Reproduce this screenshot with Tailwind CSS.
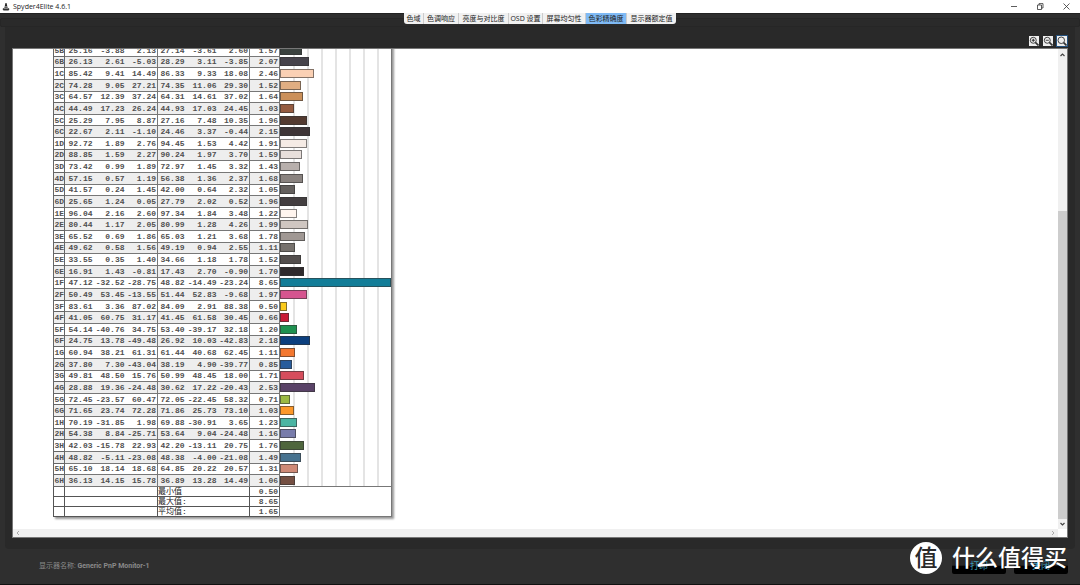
<!DOCTYPE html>
<html lang="zh-CN">
<head>
<meta charset="utf-8">
<title>Spyder4Elite 4.6.1</title>
<script src="https://cdn.jsdelivr.net/npm/@tailwindcss/browser@4"></script>
</head>
<body class="flex h-screen flex-col overflow-hidden bg-[#2f2f2f] font-['Open_Sans','Noto_Sans_CJK_SC',sans-serif] text-[7px] leading-none">
<header class="flex h-[13px] shrink-0 items-center justify-between bg-white pl-[2px] pr-[10px] text-[#222]">
  <div class="flex items-center gap-[3px]">
    <svg class="size-[8px]" viewBox="0 0 16 16"><path d="M7 0h2l1 4 1 5H5l1-5z" fill="#222"/><path d="M1 12l4-3h6l4 3-2 3H3z" fill="#333"/><path d="M5 7h6M4 11h8" stroke="#ddd"/></svg>
    <h1>Spyder4Elite 4.6.1</h1>
  </div>
  <div class="flex items-center gap-[19px]">
    <button aria-label="最小化"><svg class="size-[7px]" viewBox="0 0 7 7"><path d="M0 3.500h6" stroke="#333" stroke-width=".8"/></svg></button>
    <button aria-label="还原"><svg class="size-[7px]" viewBox="0 0 7 7" fill="none" stroke="#333" stroke-width=".8"><path d="M.5 2h4v4.500h-4zM2 2V.6h4V5H4.500"/></svg></button>
    <button aria-label="关闭窗口"><svg class="size-[7px]" viewBox="0 0 7 7"><path d="M.5.500l6 6M6.500.500l-6 6" stroke="#333" stroke-width=".8"/></svg></button>
  </div>
</header>
<div class="h-[5px] shrink-0 border-t border-[#222] bg-[#2e2e2e]"></div>
<div class="flex min-h-0 flex-1 flex-col">
  <div class="relative h-[9px] shrink-0 rounded-[2px] border border-[#262626] bg-[#2a2a2a]">
    <nav class="absolute -top-[6px] left-1/2 flex h-[11px] -translate-x-1/2 divide-x divide-[#ccc] overflow-hidden rounded-b-[3px] bg-[#f1f1f1] whitespace-nowrap text-[#222]">
      <button class="w-[20px]">色域</button>
      <button class="w-[35px]">色调响应</button>
      <button class="w-[50px]">亮度与对比度</button>
      <button class="w-[34px]">OSD 设置</button>
      <button class="w-[43px]">屏幕均匀性</button>
      <button class="w-[41px] bg-[#7fbaf5]" aria-current="page">色彩精确度</button>
      <button class="w-[49px]">显示器额定值</button>
    </nav>
  </div>
  <main class="mx-[5px] flex min-h-0 flex-1 flex-col rounded-b-[4px] bg-[#292929] px-[7px] pb-[11px]">
    <div class="flex h-[21px] shrink-0 items-center justify-end gap-[4px] pr-[1px] pt-[6px]">
      <button aria-label="放大" class="bg-[#eee]"><svg class="size-[10px]" viewBox="0 0 11 11" fill="none" stroke="#333"><circle cx="4.700" cy="4.700" r="3.300"/><path d="M7 7l3.500 3.500" stroke-width="1.800"/><path d="M3 4.700h3.400M4.700 3v3.400" stroke-width="1.300"/></svg></button>
      <button aria-label="缩小" class="bg-[#eee]"><svg class="size-[10px]" viewBox="0 0 11 11" fill="none" stroke="#333"><circle cx="4.700" cy="4.700" r="3.300"/><path d="M7 7l3.500 3.500" stroke-width="1.800"/><path d="M3 4.700h3.400"/></svg></button>
      <button aria-label="适合窗口" class="bg-[#eee] outline outline-[#24507c]"><svg class="size-[10px]" viewBox="0 0 11 11" fill="none" stroke="#333"><circle cx="4.700" cy="4.700" r="3.600"/><path d="M7.300 7.300l3.200 3.200" stroke-width="1.800"/></svg></button>
    </div>
    <div class="flex min-h-0 flex-1 flex-col border border-[#777] bg-white">
      <div class="flex min-h-0 flex-1">
        <section class="min-w-0 flex-1 overflow-hidden pl-[40px]">
          <div class="-mt-[5px] w-[339px] shadow-[2px_2px_2px_#999]">
            <table class="h-[473px] w-full table-fixed border-collapse border border-[#777] bg-white text-right font-['Liberation_Mono','Noto_Sans_CJK_SC',monospace] text-[8px] font-bold text-[#505050]">
              <colgroup><col class="w-[11px]"><col class="w-[29px]"><col class="w-[32px]"><col class="w-[32px]"><col class="w-[28px]"><col class="w-[32px]"><col class="w-[32px]"><col class="w-[30px]"><col></colgroup>
              <tbody id="rows"></tbody>
              <tfoot class="font-normal">
                <tr class="h-[10px]"><td class="border border-[#555]"></td><td colspan="3" class="border border-[#555]"></td><td colspan="3" class="border border-[#555] text-left leading-[9px] text-[#222]">最小值</td><td class="border border-[#555] pr-px font-bold leading-[9px]">0.50</td><td rowspan="3" class="border border-[#777]"></td></tr>
                <tr class="h-[10px]"><td class="border border-[#555]"></td><td colspan="3" class="border border-[#555]"></td><td colspan="3" class="border border-[#555] text-left leading-[9px] text-[#222]">最大值:</td><td class="border border-[#555] pr-px font-bold leading-[9px]">8.65</td></tr>
                <tr class="h-[10px]"><td class="border border-[#555]"></td><td colspan="3" class="border border-[#555]"></td><td colspan="3" class="border border-[#555] text-left leading-[9px] text-[#222]">平均值:</td><td class="border border-[#555] pr-px font-bold leading-[9px]">1.65</td></tr>
              </tfoot>
            </table>
          </div>
        </section>
        <div class="flex w-[9px] shrink-0 flex-col bg-[#f0f0f0]">
          <svg class="h-[11px] w-[9px]" viewBox="0 0 9 11"><path d="M2.500 7l2-2 2 2" fill="none" stroke="#444" stroke-width="1.200"/></svg>
          <div class="grow-[151]"></div>
          <div class="grow-[307] bg-[#cdcdcd]"></div>
          <svg class="h-[10px] w-[9px]" viewBox="0 0 9 10"><path d="M2.500 4l2 2 2-2" fill="none" stroke="#444" stroke-width="1.200"/></svg>
        </div>
      </div>
      <div class="mr-[9px] flex h-[8px] shrink-0 items-center justify-between bg-[#f0f0f0] px-[2px]">
        <svg class="size-[6px]" viewBox="0 0 6 6"><path d="M4 1L2 3l2 2" fill="none" stroke="#aaa"/></svg>
        <svg class="size-[6px]" viewBox="0 0 6 6"><path d="M2 1l2 2-2 2" fill="none" stroke="#aaa"/></svg>
      </div>
    </div>
  </main>
</div>
<footer class="relative flex h-[36px] shrink-0 items-center justify-between border-b border-[#111] pl-[39px] pr-[12px] text-[#8a8a8a]">
  <p class="font-['Roboto','Noto_Sans_CJK_SC',sans-serif]">显示器名称: <b>Generic PnP Monitor-1</b></p>
  <div class="flex gap-[8px] pb-[2px] text-[9px] text-[#3a9ab8]">
    <button class="h-[16px] w-[54px] rounded-[2px] bg-linear-to-b from-[#282828] from-45% to-black to-55%">打印</button>
    <button class="h-[16px] w-[54px] rounded-[2px] bg-linear-to-b from-[#282828] from-45% to-black to-55%">关闭</button>
  </div>
  <div class="absolute -top-[7px] right-[13px] flex items-center gap-[10px] text-white">
    <span class="flex size-[32px] items-center justify-center rounded-full bg-white pb-[2px] text-[23px] font-medium text-[#2a2a2a]">值</span>
    <span class="pb-[2px] text-[23px] font-medium">什么值得买</span>
  </div>
</footer>
<script>
const data = `5B 25.16 -3.88 2.13 27.14 -3.61 2.60 1.57 #3b423f
6B 26.13 2.61 -5.03 28.29 3.11 -3.85 2.07 #46434b
1C 85.42 9.41 14.49 86.33 9.33 18.08 2.46 #fad0b4
2C 74.28 9.05 27.21 74.35 11.06 29.30 1.52 #e0ae82
3C 64.57 12.39 37.24 64.31 14.61 37.02 1.64 #cb905a
4C 44.49 17.23 26.24 44.93 17.03 24.45 1.03 #955b40
5C 25.29 7.95 8.87 27.16 7.48 10.35 1.96 #533a30
6C 22.67 2.11 -1.10 24.46 3.37 -0.44 2.15 #3e3537
1D 92.72 1.89 2.76 94.45 1.53 4.42 1.91 #f5ebe5
2D 88.85 1.59 2.27 90.24 1.97 3.70 1.59 #e8dfdb
3D 73.42 0.99 1.89 72.97 1.45 3.32 1.43 #b7afac
4D 57.15 0.57 1.19 56.38 1.36 2.37 1.68 #8a8380
5D 41.57 0.24 1.45 42.00 0.64 2.32 1.05 #64605e
6D 25.65 1.24 0.05 27.79 2.02 0.52 1.96 #433e40
1E 96.04 2.16 2.60 97.34 1.84 3.48 1.22 #fff5ef
2E 80.44 1.17 2.05 80.99 1.28 4.26 1.99 #cfc6c1
3E 65.52 0.69 1.86 65.03 1.21 3.68 1.78 #a09894
4E 49.62 0.58 1.56 49.19 0.94 2.55 1.11 #76716d
5E 33.55 0.35 1.40 34.66 1.18 1.78 1.52 #534e4d
6E 16.91 1.43 -0.81 17.43 2.70 -0.90 1.70 #2f2a2c
1F 47.12 -32.52 -28.75 48.82 -14.49 -23.24 8.65 #127d98
2F 50.49 53.45 -13.55 51.44 52.83 -9.68 1.97 #d5548f
3F 83.61 3.36 87.02 84.09 2.91 88.38 0.50 #fbcb1c
4F 41.05 60.75 31.17 41.45 61.58 30.45 0.66 #c91c37
5F 54.14 -40.76 34.75 53.40 -39.17 32.18 1.20 #1e9150
6F 24.75 13.78 -49.48 26.92 10.03 -42.83 2.18 #0c3f7e
1G 60.94 38.21 61.31 61.44 40.68 62.45 1.11 #f3772f
2G 37.80 7.30 -43.04 38.19 4.90 -39.77 0.85 #285d9c
3G 49.81 48.50 15.76 50.99 48.45 18.00 1.71 #d64d5c
4G 28.88 19.36 -24.48 30.62 17.22 -20.43 2.53 #5a4368
5G 72.45 -23.57 60.47 72.05 -22.45 58.32 0.71 #9bb944
6G 71.65 23.74 72.28 71.86 25.73 73.10 1.03 #fc982a
1H 70.19 -31.85 1.98 69.88 -30.91 3.65 1.23 #4bb5a3
2H 54.38 8.84 -25.71 53.64 9.04 -24.48 1.16 #787cab
3H 42.03 -15.78 22.93 42.20 -13.11 20.75 1.76 #4f663d
4H 48.82 -5.11 -23.08 48.38 -4.00 -21.08 1.49 #47728f
5H 65.10 18.14 18.68 64.85 20.22 20.57 1.31 #cf8a77
6H 36.13 14.15 15.78 36.89 13.28 14.49 1.06 #744f42`;
document.getElementById('rows').innerHTML = data.split('\n').map(line => {
  const c = line.split(' ');
  const cell = (v, edge) => `<td class="border-y border-[#777] pr-px leading-[9px] ${edge}">${v}</td>`;
  return `<tr class="h-[11px] even:bg-[#eee]">`
    + `<th scope="row" class="border border-[#666] leading-[9px] font-bold">${c[0]}</th>`
    + cell(c[1], '') + cell(c[2], '') + cell(c[3], 'border-r')
    + cell(c[4], '') + cell(c[5], '') + cell(c[6], 'border-r')
    + cell(c[7], 'border-r')
    + `<td class="bg-white bg-[repeating-linear-gradient(to_right,transparent_0_13px,#c8c8c8_13px_14px)]"><div class="h-[9px] border border-[#333]/60" style="width:${Math.min(c[7] / 8 * 100, 100)}%;background-color:${c[8]}"></div></td></tr>`;
}).join('');
</script>
</body>
</html>
